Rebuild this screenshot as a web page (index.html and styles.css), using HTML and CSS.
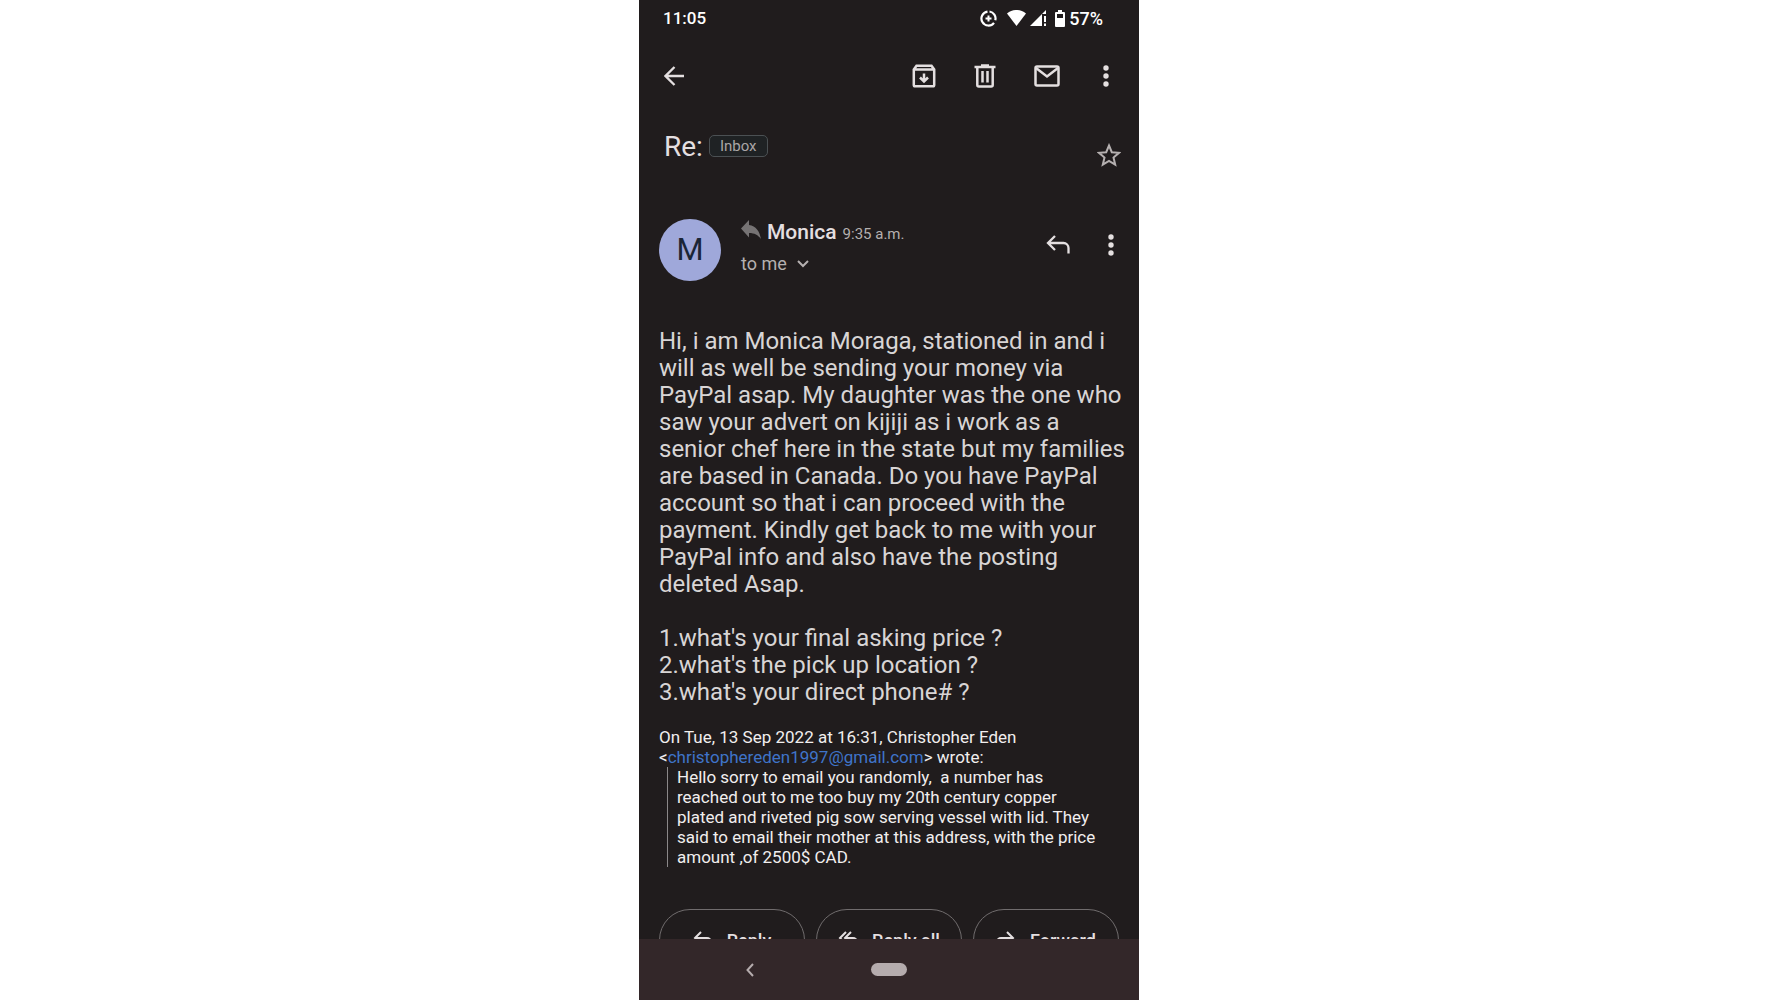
FILE: index.html
```html
<!DOCTYPE html>
<html lang="en">
<head>
<meta charset="utf-8">
<meta name="viewport" content="width=device-width, initial-scale=1">
<title>Re: - Inbox</title>
<link rel="stylesheet" href="styles.css">
</head>
<body>
<div class="phone">
  <header class="status">
    <span class="clock">11:05</span>
    <div class="indicators">
      <svg class="saver" width="17" height="17" viewBox="0 0 17 17" fill="none" stroke="currentColor"><path d="M9.500 1.500A7 7 0 0 1 15.300 10.200M14 12.800A7 7 0 1 1 7.500 1.600" stroke-width="2.200"/><path d="M8.500 5.500v6M5.500 8.500h6" stroke-width="2"/></svg>
      <svg width="19" height="16" viewBox="0 0 19 16" fill="currentColor"><path d="M0 3.500C5.500-1.200 13.500-1.200 19 3.500L9.500 16z"/></svg>
      <svg class="signal" width="17" height="16" viewBox="0 0 17 16" fill="currentColor"><path d="M0 16L16 0v4h-4v12zM14 6h2v6h-2zM14 13.500h2V16h-2z"/></svg>
      <svg width="10" height="17" viewBox="0 0 10 17"><path d="M3 0h4v2h2a1 1 0 0 1 1 1v13a1 1 0 0 1-1 1H1a1 1 0 0 1-1-1V3a1 1 0 0 1 1-1h2z" fill="currentColor"/><path d="M2 4h6v4H2z" fill="#201c1d"/></svg>
      <span class="percent">57%</span>
    </div>
  </header>

  <nav class="toolbar" aria-label="Message actions">
    <button class="icon back" aria-label="Back"><svg width="20" height="20" viewBox="0 0 20 20" fill="none" stroke="currentColor" stroke-width="2.300"><path d="M20 10H2M10.500 1L1.500 10l9 9"/></svg></button>
    <button class="icon" aria-label="Archive"><svg width="24" height="24" viewBox="0 0 24 24" fill="none" stroke="currentColor" stroke-width="2.500"><path d="M1.800 5.500L4.500 1.800h15l2.700 3.700V21a1.300 1.300 0 0 1-1.300 1.300H3.100A1.300 1.300 0 0 1 1.800 21zM1.800 5.600h20.400M12 9.500v8M8 13.500l4 4 4-4"/></svg></button>
    <button class="icon" aria-label="Delete"><svg width="22" height="24" viewBox="0 0 22 24" fill="none" stroke="currentColor" stroke-width="2.500"><path d="M.5 3h21M7 1.500h8M3.300 3v18a1.500 1.500 0 0 0 1.500 1.500h12.400a1.500 1.500 0 0 0 1.500-1.500V3M8.500 7v11.500M13.500 7v11.500"/></svg></button>
    <button class="icon" aria-label="Mark as unread"><svg width="26" height="22" viewBox="0 0 26 22" fill="none" stroke="currentColor" stroke-width="2.500"><rect x="1.500" y="1.500" width="23" height="19" rx="1.500"/><path d="M2 3l11 8.500L24 3"/></svg></button>
    <button class="icon more" aria-label="More options"><svg width="6" height="22" viewBox="0 0 6 22" fill="currentColor"><circle cx="3" cy="3" r="2.700"/><circle cx="3" cy="11" r="2.700"/><circle cx="3" cy="19" r="2.700"/></svg></button>
  </nav>

  <main class="message">
    <div class="subject">
      <h1>Re:</h1>
      <span class="label">Inbox</span>
      <button class="icon star" aria-label="Star"><svg width="24" height="24" viewBox="0 0 24 24" fill="none" stroke="currentColor" stroke-width="2"><path d="M12 2.500l2.800 6.700 7.200.6-5.500 4.700 1.700 7.100-6.200-3.800-6.200 3.800 1.700-7.100L2 9.800l7.200-.6z"/></svg></button>
    </div>

    <div class="sender">
      <div class="avatar">M</div>
      <div class="who">
        <div class="from">
          <svg class="replied" width="20" height="20" viewBox="0 0 20 20" fill="#767374"><path d="M0 8.500L8 0v5c7 1 10.500 6 12 14-3-4-6.500-6-12-6v4.500z"/></svg>
          <strong>Monica</strong>
          <time>9:35 a.m.</time>
        </div>
        <button class="to">to me <svg width="12" height="8" viewBox="0 0 12 8" fill="none" stroke="currentColor" stroke-width="2"><path d="M1 1l5 5 5-5"/></svg></button>
      </div>
      <button class="icon reply" aria-label="Reply"><svg width="24" height="20" viewBox="0 0 24 20" fill="none" stroke="currentColor" stroke-width="2.300"><path d="M9 1L2 8l7 7M2 8h15.500a5 5 0 0 1 5 5v5.500"/></svg></button>
      <button class="icon more" aria-label="More options"><svg width="6" height="22" viewBox="0 0 6 22" fill="currentColor"><circle cx="3" cy="3" r="2.700"/><circle cx="3" cy="11" r="2.700"/><circle cx="3" cy="19" r="2.700"/></svg></button>
    </div>

    <div class="body">
      <p>Hi, i am Monica Moraga, stationed in and i<br>will as well be sending your money via<br>PayPal asap. My daughter was the one who<br>saw your advert on kijiji as i work as a<br>senior chef here in the state but my families<br>are based in Canada. Do you have PayPal<br>account so that i can proceed with the<br>payment. Kindly get back to me with your<br>PayPal info and also have the posting<br>deleted Asap.</p>
      <p>1.what's your final asking price ?<br>2.what's the pick up location ?<br>3.what's your direct phone# ?</p>
    </div>

    <div class="quote">
      <p>On Tue, 13 Sep 2022 at 16:31, Christopher Eden<br>&lt;<a href="mailto:christophereden1997@gmail.com">christophereden1997@gmail.com</a>&gt; wrote:</p>
      <blockquote>Hello sorry to email you randomly,&nbsp; a number has<br>reached out to me too buy my 20th century copper<br>plated and riveted pig sow serving vessel with lid. They<br>said to email their mother at this address, with the price<br>amount ,of 2500$ CAD.</blockquote>
    </div>

    <div class="actions">
      <button><svg width="20" height="18" viewBox="0 0 20 18" fill="none" stroke="currentColor" stroke-width="2"><path d="M8 1L2 7l6 6M2 7h12a4 4 0 0 1 4 4v6"/></svg>Reply</button>
      <button><svg width="20" height="18" viewBox="0 0 20 18" fill="none" stroke="currentColor" stroke-width="2"><path d="M8 1L2 7l6 6M13 1L7 7l6 6M7 7h8a4 4 0 0 1 4 4v6"/></svg>Reply all</button>
      <button><svg width="20" height="18" viewBox="0 0 20 18" fill="none" stroke="currentColor" stroke-width="2"><path d="M11 1l6 6-6 6M17 7H5a4 4 0 0 0-4 4v6"/></svg>Forward</button>
    </div>
  </main>

  <footer class="system">
    <button class="icon" aria-label="System back"><svg width="8" height="14" viewBox="0 0 8 14" fill="none" stroke="currentColor" stroke-width="2"><path d="M7 1L1.500 7 7 13"/></svg></button>
    <button class="home" aria-label="Home"></button>
  </footer>
</div>
</body>
</html>
```
FILE: styles.css
```css
* {
  box-sizing: border-box;
}

body {
  margin: 0;
  background: #fff;
  font-family: Roboto, "Liberation Sans", sans-serif;
}

p, h1, blockquote {
  margin: 0;
}

button {
  padding: 0;
  border: 0;
  background: none;
  color: inherit;
  font: inherit;
}

svg {
  display: block;
  flex: none;
}

.phone {
  display: flex;
  flex-direction: column;
  max-width: 500px;
  height: 100vh;
  margin: 0 auto;
  background: #201c1d;
  color: #e4dfe0;
}

.status {
  display: flex;
  flex: none;
  justify-content: space-between;
  align-items: center;
  height: 36px;
  padding: 0 36px 0 24px;
  color: #fff;
  font-size: 18px;
  font-weight: 500;
}

.clock {
  font-size: 17px;
}

.indicators {
  display: flex;
  align-items: center;
  gap: 4px;
}

.saver {
  margin-right: 6px;
}

.signal {
  margin-right: 4px;
}

.icon {
  display: flex;
  flex: none;
  justify-content: center;
  align-items: center;
}

.toolbar {
  display: flex;
  flex: none;
  align-items: center;
  gap: 38px;
  height: 80px;
  padding: 0 30px 0 25px;
}

.back {
  margin-right: auto;
}

.toolbar .more {
  margin-left: 5px;
}

.message {
  flex: 1;
  min-height: 0;
  overflow: hidden;
  padding: 0 20px;
}

.subject {
  display: flex;
  align-items: center;
  gap: 6px;
  height: 60px;
  padding-left: 5px;
}

.subject h1 {
  font-size: 28px;
  font-weight: 400;
}

.label {
  height: 22px;
  padding: 0 10px;
  border: 1px solid #4b5053;
  border-radius: 5px;
  background: #1f2224;
  color: #aaa6a7;
  font-size: 15px;
  line-height: 20px;
}

.star {
  margin: 18px -2px 0 auto;
  color: #b5b0b0;
}

.sender {
  display: flex;
  align-items: center;
  height: 62px;
  margin-top: 43px;
}

.avatar {
  flex: none;
  width: 62px;
  height: 62px;
  border-radius: 50%;
  background: #9fa8da;
  color: #1b2536;
  font-size: 31px;
  line-height: 62px;
  text-align: center;
}

.who {
  flex: 1;
  margin: 0 0 6px 20px;
}

.from {
  display: flex;
  align-items: baseline;
  gap: 6px;
}

.replied {
  align-self: flex-start;
}

.from strong {
  font-size: 21px;
  font-weight: 500;
}

.from time {
  color: #b5b0b0;
  font-size: 15px;
}

.to {
  display: flex;
  align-items: center;
  gap: 10px;
  margin-top: 9px;
  color: #b5b0b0;
  font-size: 18px;
}

.reply {
  margin: 0 38px 10px 0;
}

.sender .more {
  margin: 0 5px 10px 0;
}

.body {
  margin-top: 47px;
  color: #d8d5d5;
  font-size: 24px;
  line-height: 27px;
  white-space: nowrap;
}

.body p + p {
  margin-top: 27px;
}

.quote {
  margin-top: 21px;
  color: #f1eeee;
  font-size: 17px;
  line-height: 20px;
  white-space: nowrap;
}

.quote a {
  color: #3f74c9;
  text-decoration: none;
}

.quote blockquote {
  margin-left: 8px;
  padding-left: 9px;
  border-left: 1px solid #8b8889;
}

.actions {
  display: grid;
  grid-template-columns: repeat(3, 1fr);
  gap: 11px;
  margin-top: 42px;
}

.actions button {
  display: flex;
  justify-content: center;
  align-items: center;
  gap: 14px;
  height: 62px;
  border: 1px solid #706c6d;
  border-radius: 31px;
  font-size: 18px;
  font-weight: 500;
}

.system {
  display: grid;
  flex: none;
  grid-template-columns: 1fr 36px 1fr;
  align-items: center;
  height: 61px;
  background: #332729;
  color: #b5acad;
}

.system .icon {
  margin-right: 10px;
}

.home {
  height: 13px;
  border-radius: 7px;
  background: #b5acad;
}
```
